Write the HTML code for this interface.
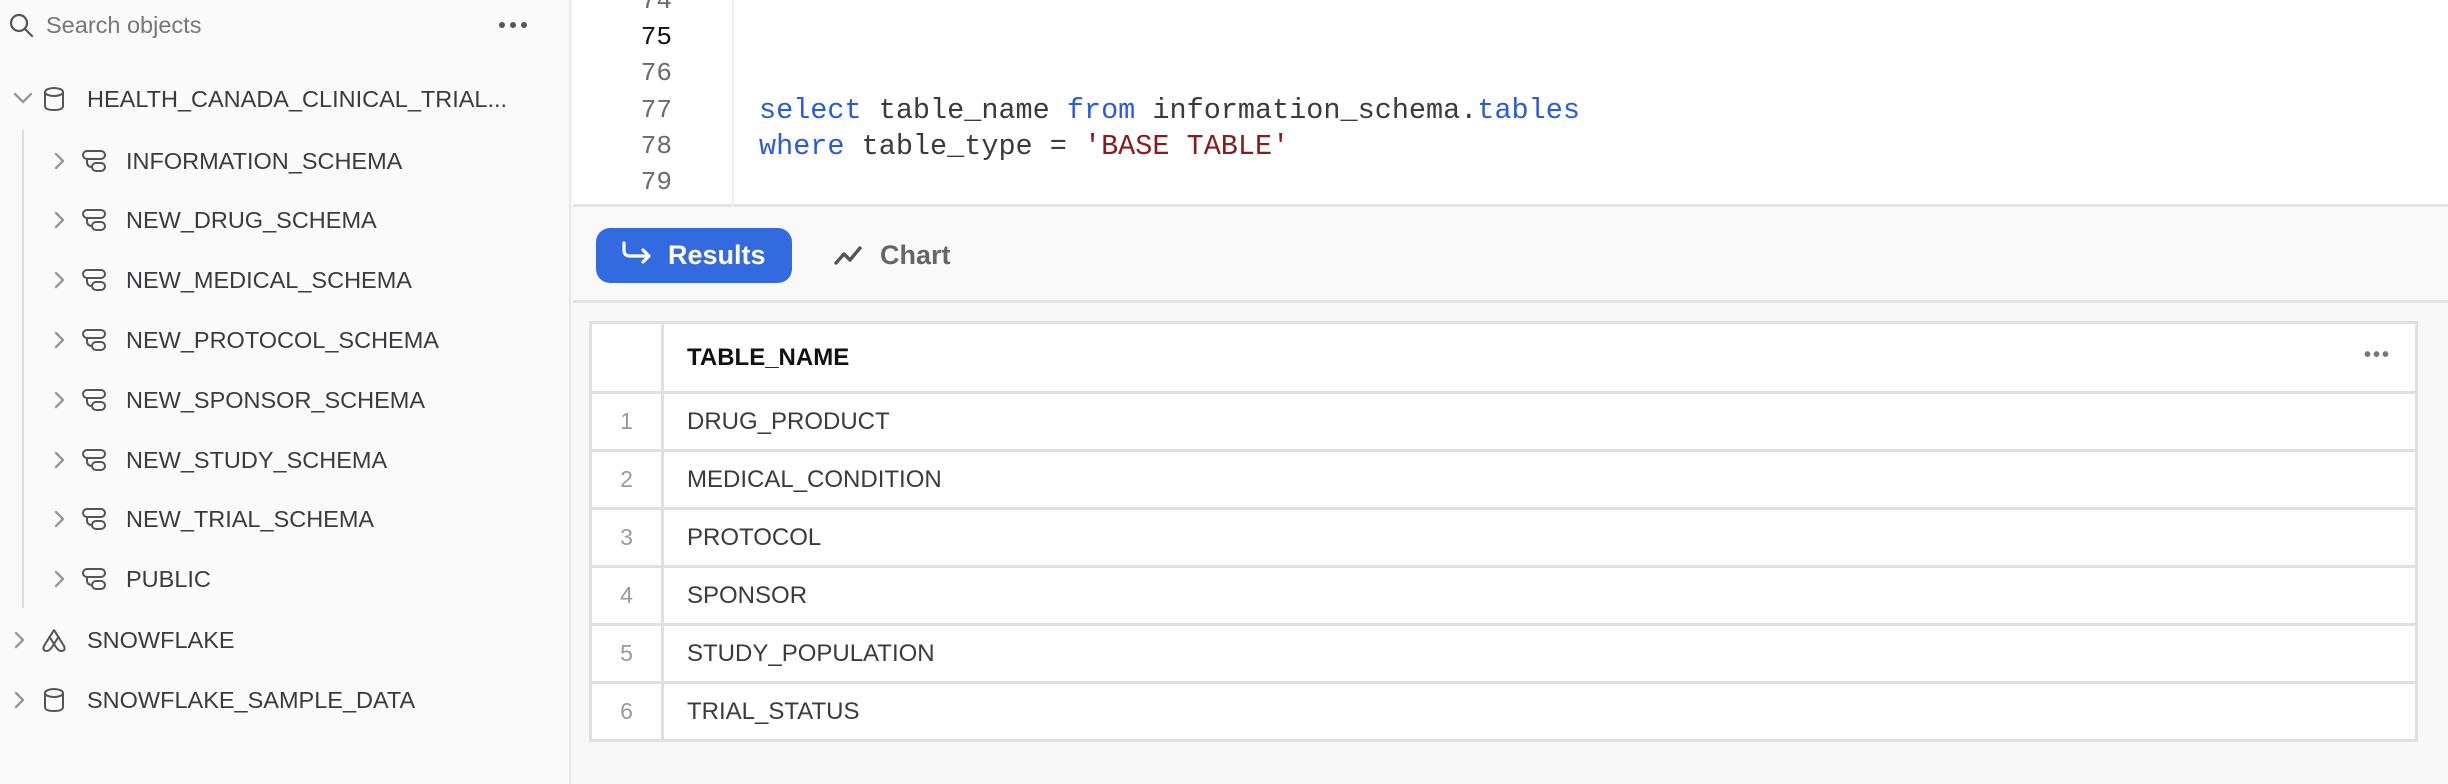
<!DOCTYPE html>
<html><head><meta charset="utf-8"><style>
*{margin:0;padding:0;box-sizing:border-box}
body{width:2448px;height:784px;overflow:hidden;background:#f8f8f8;font-family:"Liberation Sans",sans-serif;position:relative;color:#3a3b3f}
.side{position:absolute;left:0;top:0;width:571px;height:784px;background:#fafafa;border-right:2px solid #e8e8e8}
.t{position:absolute;font-size:23.5px;color:#3a3b3f;white-space:nowrap;line-height:28px}
.abs{position:absolute}
.editor{position:absolute;left:573px;top:0;width:1875px;height:207px;background:#fff;border-bottom:3px solid #e3e3e3}
.ln{position:absolute;width:100px;left:572px;text-align:right;font-family:"Liberation Mono",monospace;font-size:26px;color:#6b6b6b;line-height:30px}
.code{position:absolute;left:759px;font-family:"Liberation Mono",monospace;font-size:28.5px;color:#3a3b3f;line-height:30px;white-space:pre}
.kw{color:#2b5bd7}.str{color:#8b1a1a}
.bar{position:absolute;left:573px;top:210px;width:1875px;height:93px;border-bottom:3px solid #e3e3e3;background:#f9f9f9}
.btn{position:absolute;left:596px;top:228px;width:196px;height:55px;background:#346adf;border-radius:14px}
table{position:absolute;left:589px;top:321px;width:1829px;border-collapse:collapse;background:#fff;border:3px solid #e0e0e0}
td{border-top:3px solid #e0e0e0;height:58px;font-size:24px;color:#3a3b3f;padding:0}
td.i{width:72px;border-right:3px solid #e0e0e0;text-align:center;color:#9a9a9a;font-size:23px}
td.v{padding-left:23px}
tr.h td{height:70px;border-top:none;font-weight:bold;color:#111}
</style></head><body>
<div class="side">
 <svg class="abs" style="left:8px;top:12px" width="28" height="28" viewBox="0 0 28 28"><circle cx="11" cy="11" r="8" fill="none" stroke="#555" stroke-width="2.2"/><line x1="17" y1="17" x2="24" y2="24" stroke="#555" stroke-width="2.2" stroke-linecap="round"/></svg>
 <div class="t" style="left:46px;top:11px;color:#777">Search objects</div>
 <div class="abs" style="left:499px;top:22px;width:30px;height:6px">
  <span class="abs" style="left:0;top:0;width:6px;height:6px;border-radius:3px;background:#555"></span>
  <span class="abs" style="left:11px;top:0;width:6px;height:6px;border-radius:3px;background:#555"></span>
  <span class="abs" style="left:22px;top:0;width:6px;height:6px;border-radius:3px;background:#555"></span></div>
 <div class="abs" style="left:22px;top:130px;width:2px;height:478px;background:#ddd"></div>
</div>
<div id="tree"></div>
<div class="editor">
 <div class="abs" style="left:159px;top:0;width:2px;height:207px;background:#f0f0f0"></div>
</div>
<div class="ln" style="top:-14px">74</div>
<div class="ln" style="top:22px;color:#111">75</div>
<div class="ln" style="top:58px">76</div>
<div class="ln" style="top:95px">77</div>
<div class="ln" style="top:131px">78</div>
<div class="ln" style="top:167px">79</div>
<div class="code" style="top:96px"><span class="kw">select</span> table_name <span class="kw">from</span> information_schema.<span class="kw">tables</span></div>
<div class="code" style="top:132px"><span class="kw">where</span> table_type = <span class="str">'BASE TABLE'</span></div>
<div class="bar"></div>
<div class="btn"></div>
<svg class="abs" style="left:620px;top:240px" width="34" height="26" viewBox="0 0 34 26"><path d="M4 3 V10 Q4 16 10 16 H29 M23 10 L29 16 L23 22" fill="none" stroke="#fff" stroke-width="3.2" stroke-linecap="round" stroke-linejoin="round"/></svg>
<div class="abs" style="left:668px;top:240px;font-size:27px;font-weight:bold;color:#fff">Results</div>
<svg class="abs" style="left:833px;top:242px" width="32" height="26" viewBox="0 0 32 26"><path d="M3 21 L11 12 L17 18 L27 6" fill="none" stroke="#555" stroke-width="3.4" stroke-linecap="round" stroke-linejoin="round"/></svg>
<div class="abs" style="left:880px;top:240px;font-size:27px;font-weight:bold;color:#666">Chart</div>
<table>
<tr class="h"><td class="i"></td><td class="v">TABLE_NAME<span style="float:right;margin-right:24px;letter-spacing:2px;color:#777;font-weight:bold;font-size:20px">•••</span></td></tr>
<tr><td class="i">1</td><td class="v">DRUG_PRODUCT</td></tr>
<tr><td class="i">2</td><td class="v">MEDICAL_CONDITION</td></tr>
<tr><td class="i">3</td><td class="v">PROTOCOL</td></tr>
<tr><td class="i">4</td><td class="v">SPONSOR</td></tr>
<tr><td class="i">5</td><td class="v">STUDY_POPULATION</td></tr>
<tr><td class="i">6</td><td class="v">TRIAL_STATUS</td></tr>
</table>

<!-- tree rows -->
<svg class="abs" style="left:12px;top:90px" width="22" height="16" viewBox="0 0 22 16"><path d="M3 4 L11 12 L19 4" fill="none" stroke="#999" stroke-width="2.4" stroke-linecap="round" stroke-linejoin="round"/></svg>
<svg class="abs" style="left:42px;top:86px" width="24" height="26" viewBox="0 0 24 26"><ellipse cx="12" cy="6" rx="9" ry="4" fill="none" stroke="#555" stroke-width="2"/><path d="M3 6 V20 Q3 24 12 24 Q21 24 21 20 V6" fill="none" stroke="#555" stroke-width="2"/></svg>
<div class="t" style="left:87px;top:85px">HEALTH_CANADA_CLINICAL_TRIAL...</div>

<svg class="abs" style="left:52px;top:150px" width="14" height="22" viewBox="0 0 14 22"><path d="M4 4 L11 11 L4 18" fill="none" stroke="#999" stroke-width="2.4" stroke-linecap="round" stroke-linejoin="round"/></svg>
<svg class="abs" style="left:81px;top:149px" width="28" height="24" viewBox="0 0 28 24"><rect x="2" y="2" width="22" height="8" rx="4" fill="none" stroke="#555" stroke-width="2"/><path d="M6 10 V13 Q6 18 11 18" fill="none" stroke="#555" stroke-width="2"/><rect x="11" y="14" width="13" height="8" rx="4" fill="none" stroke="#555" stroke-width="2"/></svg>
<div class="t" style="left:126px;top:147px">INFORMATION_SCHEMA</div>

<svg class="abs" style="left:52px;top:209px" width="14" height="22" viewBox="0 0 14 22"><path d="M4 4 L11 11 L4 18" fill="none" stroke="#999" stroke-width="2.4" stroke-linecap="round" stroke-linejoin="round"/></svg>
<svg class="abs" style="left:81px;top:208px" width="28" height="24" viewBox="0 0 28 24"><rect x="2" y="2" width="22" height="8" rx="4" fill="none" stroke="#555" stroke-width="2"/><path d="M6 10 V13 Q6 18 11 18" fill="none" stroke="#555" stroke-width="2"/><rect x="11" y="14" width="13" height="8" rx="4" fill="none" stroke="#555" stroke-width="2"/></svg>
<div class="t" style="left:126px;top:206px">NEW_DRUG_SCHEMA</div>

<svg class="abs" style="left:52px;top:269px" width="14" height="22" viewBox="0 0 14 22"><path d="M4 4 L11 11 L4 18" fill="none" stroke="#999" stroke-width="2.4" stroke-linecap="round" stroke-linejoin="round"/></svg>
<svg class="abs" style="left:81px;top:268px" width="28" height="24" viewBox="0 0 28 24"><rect x="2" y="2" width="22" height="8" rx="4" fill="none" stroke="#555" stroke-width="2"/><path d="M6 10 V13 Q6 18 11 18" fill="none" stroke="#555" stroke-width="2"/><rect x="11" y="14" width="13" height="8" rx="4" fill="none" stroke="#555" stroke-width="2"/></svg>
<div class="t" style="left:126px;top:266px">NEW_MEDICAL_SCHEMA</div>

<svg class="abs" style="left:52px;top:329px" width="14" height="22" viewBox="0 0 14 22"><path d="M4 4 L11 11 L4 18" fill="none" stroke="#999" stroke-width="2.4" stroke-linecap="round" stroke-linejoin="round"/></svg>
<svg class="abs" style="left:81px;top:328px" width="28" height="24" viewBox="0 0 28 24"><rect x="2" y="2" width="22" height="8" rx="4" fill="none" stroke="#555" stroke-width="2"/><path d="M6 10 V13 Q6 18 11 18" fill="none" stroke="#555" stroke-width="2"/><rect x="11" y="14" width="13" height="8" rx="4" fill="none" stroke="#555" stroke-width="2"/></svg>
<div class="t" style="left:126px;top:326px">NEW_PROTOCOL_SCHEMA</div>

<svg class="abs" style="left:52px;top:389px" width="14" height="22" viewBox="0 0 14 22"><path d="M4 4 L11 11 L4 18" fill="none" stroke="#999" stroke-width="2.4" stroke-linecap="round" stroke-linejoin="round"/></svg>
<svg class="abs" style="left:81px;top:388px" width="28" height="24" viewBox="0 0 28 24"><rect x="2" y="2" width="22" height="8" rx="4" fill="none" stroke="#555" stroke-width="2"/><path d="M6 10 V13 Q6 18 11 18" fill="none" stroke="#555" stroke-width="2"/><rect x="11" y="14" width="13" height="8" rx="4" fill="none" stroke="#555" stroke-width="2"/></svg>
<div class="t" style="left:126px;top:386px">NEW_SPONSOR_SCHEMA</div>

<svg class="abs" style="left:52px;top:449px" width="14" height="22" viewBox="0 0 14 22"><path d="M4 4 L11 11 L4 18" fill="none" stroke="#999" stroke-width="2.4" stroke-linecap="round" stroke-linejoin="round"/></svg>
<svg class="abs" style="left:81px;top:448px" width="28" height="24" viewBox="0 0 28 24"><rect x="2" y="2" width="22" height="8" rx="4" fill="none" stroke="#555" stroke-width="2"/><path d="M6 10 V13 Q6 18 11 18" fill="none" stroke="#555" stroke-width="2"/><rect x="11" y="14" width="13" height="8" rx="4" fill="none" stroke="#555" stroke-width="2"/></svg>
<div class="t" style="left:126px;top:446px">NEW_STUDY_SCHEMA</div>

<svg class="abs" style="left:52px;top:508px" width="14" height="22" viewBox="0 0 14 22"><path d="M4 4 L11 11 L4 18" fill="none" stroke="#999" stroke-width="2.4" stroke-linecap="round" stroke-linejoin="round"/></svg>
<svg class="abs" style="left:81px;top:507px" width="28" height="24" viewBox="0 0 28 24"><rect x="2" y="2" width="22" height="8" rx="4" fill="none" stroke="#555" stroke-width="2"/><path d="M6 10 V13 Q6 18 11 18" fill="none" stroke="#555" stroke-width="2"/><rect x="11" y="14" width="13" height="8" rx="4" fill="none" stroke="#555" stroke-width="2"/></svg>
<div class="t" style="left:126px;top:505px">NEW_TRIAL_SCHEMA</div>

<svg class="abs" style="left:52px;top:568px" width="14" height="22" viewBox="0 0 14 22"><path d="M4 4 L11 11 L4 18" fill="none" stroke="#999" stroke-width="2.4" stroke-linecap="round" stroke-linejoin="round"/></svg>
<svg class="abs" style="left:81px;top:567px" width="28" height="24" viewBox="0 0 28 24"><rect x="2" y="2" width="22" height="8" rx="4" fill="none" stroke="#555" stroke-width="2"/><path d="M6 10 V13 Q6 18 11 18" fill="none" stroke="#555" stroke-width="2"/><rect x="11" y="14" width="13" height="8" rx="4" fill="none" stroke="#555" stroke-width="2"/></svg>
<div class="t" style="left:126px;top:565px">PUBLIC</div>

<svg class="abs" style="left:12px;top:629px" width="14" height="22" viewBox="0 0 14 22"><path d="M4 4 L11 11 L4 18" fill="none" stroke="#999" stroke-width="2.4" stroke-linecap="round" stroke-linejoin="round"/></svg>
<svg class="abs" style="left:40px;top:627px" width="28" height="26" viewBox="0 0 28 26"><path d="M14 3 L4 19 Q2 24 7 24 Q10 24 14 17 Q18 24 21 24 Q26 24 24 19 Z M14 17 L9 9 M14 17 L19 9" fill="none" stroke="#555" stroke-width="2" stroke-linejoin="round"/></svg>
<div class="t" style="left:87px;top:626px">SNOWFLAKE</div>

<svg class="abs" style="left:12px;top:689px" width="14" height="22" viewBox="0 0 14 22"><path d="M4 4 L11 11 L4 18" fill="none" stroke="#999" stroke-width="2.4" stroke-linecap="round" stroke-linejoin="round"/></svg>
<svg class="abs" style="left:42px;top:687px" width="24" height="26" viewBox="0 0 24 26"><ellipse cx="12" cy="6" rx="9" ry="4" fill="none" stroke="#555" stroke-width="2"/><path d="M3 6 V20 Q3 24 12 24 Q21 24 21 20 V6" fill="none" stroke="#555" stroke-width="2"/></svg>
<div class="t" style="left:87px;top:686px">SNOWFLAKE_SAMPLE_DATA</div>
</body></html>
